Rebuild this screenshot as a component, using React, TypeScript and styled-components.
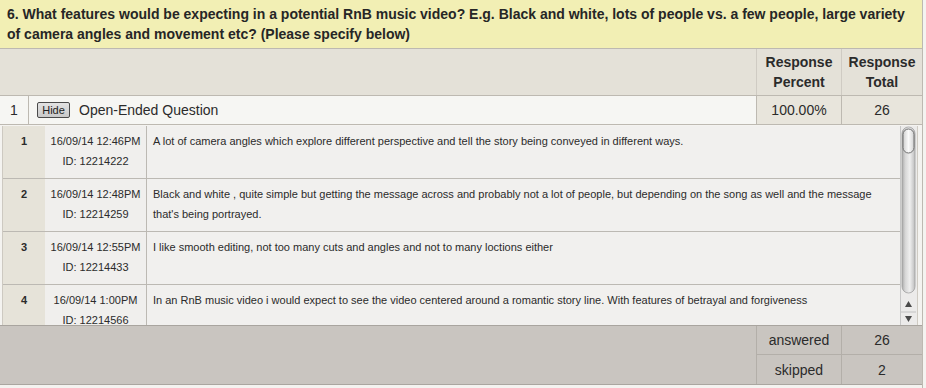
import styled, { createGlobalStyle } from 'styled-components';

const GlobalStyle = createGlobalStyle`
  html, body {
    margin: 0;
    padding: 0;
    background: #f4f3f0;
  }
  body {
    font-family: "Liberation Sans", Arial, sans-serif;
    color: #2b2b2b;
  }
`;

const FRAME_BORDER = '#bdb9b1';

const Wrapper = styled.div`
  width: 922px;
  height: 388px;
  overflow: hidden;
  border-right: 1px solid ${FRAME_BORDER};
`;

const Question = styled.div`
  background: #f2efb4;
  padding: 4px 7px 4px 7px;
  height: 40px;
  font-size: 14px;
  font-weight: bold;
  line-height: 20px;
  color: #262626;
  border-bottom: 1px solid ${FRAME_BORDER};
`;

const HeadRow = styled.div`
  display: grid;
  grid-template-columns: 1fr 85px 81px;
  height: 46px;
  background: #e4e1d8;
  border-bottom: 1px solid ${FRAME_BORDER};
`;

const HeadCell = styled.div`
  display: flex;
  align-items: center;
  justify-content: center;
  text-align: center;
  font-size: 14px;
  font-weight: bold;
  line-height: 20px;
  border-left: 1px solid #cfcbc3;
`;

const QuestionRow = styled.div`
  display: grid;
  grid-template-columns: 28px 1fr 85px 81px;
  height: 28px;
  background: #f6f6f3;
  border-bottom: 1px solid ${FRAME_BORDER};
  font-size: 14px;
`;

const Cell = styled.div<{ $shaded?: boolean; $center?: boolean; $edge?: boolean }>`
  display: flex;
  align-items: center;
  justify-content: ${p => (p.$center ? 'center' : 'flex-start')};
  gap: 9px;
  padding-left: ${p => (p.$center ? '0' : '8px')};
  background: ${p => (p.$shaded ? '#e8e5dc' : 'transparent')};
  border-left: ${p => (p.$edge ? `1px solid ${FRAME_BORDER}` : 'none')};
`;

const HideButton = styled.button`
  font-family: "Liberation Sans", Arial, sans-serif;
  font-size: 11px;
  line-height: 12px;
  padding: 1px 3px;
  width: 33px;
  height: 16px;
  color: #222;
  background: linear-gradient(#e2e2e2, #c9c9c9);
  border: 1px solid #4a4a4a;
  border-radius: 2px;
`;

const Responses = styled.div`
  display: flex;
  height: 199px;
  margin: 1px 4px 0 2px;
  background: #f0efed;
  border-left: 1px solid #cdc9c1;
  border-right: 1px solid #cfcbc3;
`;

const ResponseList = styled.div`
  flex: 1;
  overflow: hidden;
`;

const ResponseRow = styled.div`
  display: grid;
  grid-template-columns: 42px 101px 1fr;
  height: 52px;
  border-bottom: 1px solid #bcb9b3;
  font-size: 11px;
  line-height: 20px;
`;

const NumCell = styled.div`
  background: #e6e3d9;
  font-weight: bold;
  text-align: center;
  padding-top: 5px;
`;

const DateCell = styled.div`
  text-align: center;
  padding-top: 5px;
  white-space: nowrap;
`;

const TextCell = styled.div`
  border-left: 1px solid #bcb9b3;
  padding: 5px 6px 0 6px;
  background: #f1f0ee;
`;

const ScrollTrack = styled.div`
  width: 17px;
  flex: none;
  background: #f0efed;
`;

const Footer = styled.div`
  display: grid;
  grid-template-columns: 1fr 85px 81px;
  grid-template-rows: 29px 29px;
  background: #c9c5c0;
  border-top: 1px solid #a9a59f;
  border-bottom: 1px solid #aaa6a0;
  font-size: 14px;
`;

const FooterBlank = styled.div`
  grid-row: 1 / span 2;
`;

const FooterCell = styled.div<{ $last?: boolean }>`
  display: flex;
  align-items: center;
  justify-content: center;
  border-left: 1px solid #b3afa9;
  border-bottom: ${p => (p.$last ? 'none' : '1px solid #b3afa9')};
`;

const responses = [
  {
    date: '16/09/14 12:46PM',
    id: '12214222',
    text: 'A lot of camera angles which explore different perspective and tell the story being conveyed in different ways.',
  },
  {
    date: '16/09/14 12:48PM',
    id: '12214259',
    text: "Black and white , quite simple but getting the message across and probably not a lot of people, but depending on the song as well and the message that's being portrayed.",
  },
  {
    date: '16/09/14 12:55PM',
    id: '12214433',
    text: 'I like smooth editing, not too many cuts and angles and not to many loctions either',
  },
  {
    date: '16/09/14 1:00PM',
    id: '12214566',
    text: 'In an RnB music video i would expect to see the video centered around a romantic story line. With features of betrayal and forgiveness',
  },
];

const Scrollbar = () => (
  <svg width="17" height="199" viewBox="0 0 17 199">
    <defs>
      <linearGradient id="groove" x1="0" x2="1" y1="0" y2="0">
        <stop offset="0" stopColor="#a9a9a9" />
        <stop offset="0.25" stopColor="#d6d6d6" />
        <stop offset="0.6" stopColor="#efefef" />
        <stop offset="1" stopColor="#bdbdbd" />
      </linearGradient>
      <linearGradient id="knob" x1="0" x2="1" y1="0" y2="0">
        <stop offset="0" stopColor="#cfcfcf" />
        <stop offset="0.5" stopColor="#fbfbfb" />
        <stop offset="1" stopColor="#d2d2d2" />
      </linearGradient>
    </defs>
    <rect x="0" y="0" width="17" height="199" fill="#ecebea" />
    <line x1="0.5" y1="0" x2="0.5" y2="199" stroke="#c7c7c7" />
    <rect x="2" y="1" width="13" height="166" rx="6.5" fill="url(#groove)" stroke="#a0a0a0" strokeWidth="0.8" />
    <rect x="3" y="3" width="11" height="24" rx="5.5" fill="url(#knob)" stroke="#6f6f6f" strokeWidth="1" />
    <line x1="1" y1="186" x2="16" y2="186" stroke="#c2c2c2" />
    <path d="M8.5 175 L12 181 L5 181 Z" fill="#4a4a4a" />
    <path d="M8.5 196 L12 190 L5 190 Z" fill="#4a4a4a" />
  </svg>
);

export default function App() {
  return (
    <>
      <GlobalStyle />
      <Wrapper>
        <Question>
          6. What features would be expecting in a potential RnB music video? E.g. Black and white, lots of people vs. a few
          people, large variety of camera angles and movement etc? (Please specify below)
        </Question>
        <HeadRow>
          <div />
          <HeadCell>
            Response
            <br />
            Percent
          </HeadCell>
          <HeadCell>
            Response
            <br />
            Total
          </HeadCell>
        </HeadRow>
        <QuestionRow>
          <Cell $center>1</Cell>
          <Cell $edge>
            <HideButton>Hide</HideButton>
            Open-Ended Question
          </Cell>
          <Cell $center $shaded $edge>
            100.00%
          </Cell>
          <Cell $center $shaded $edge>
            26
          </Cell>
        </QuestionRow>
        <Responses>
          <ResponseList>
            {responses.map((r, i) => (
              <ResponseRow key={r.id}>
                <NumCell>{i + 1}</NumCell>
                <DateCell>
                  {r.date}
                  <br />
                  ID: {r.id}
                </DateCell>
                <TextCell>{r.text}</TextCell>
              </ResponseRow>
            ))}
          </ResponseList>
          <ScrollTrack>
            <Scrollbar />
          </ScrollTrack>
        </Responses>
        <Footer>
          <FooterBlank />
          <FooterCell>answered</FooterCell>
          <FooterCell>26</FooterCell>
          <FooterCell $last>skipped</FooterCell>
          <FooterCell $last>2</FooterCell>
        </Footer>
      </Wrapper>
    </>
  );
}
